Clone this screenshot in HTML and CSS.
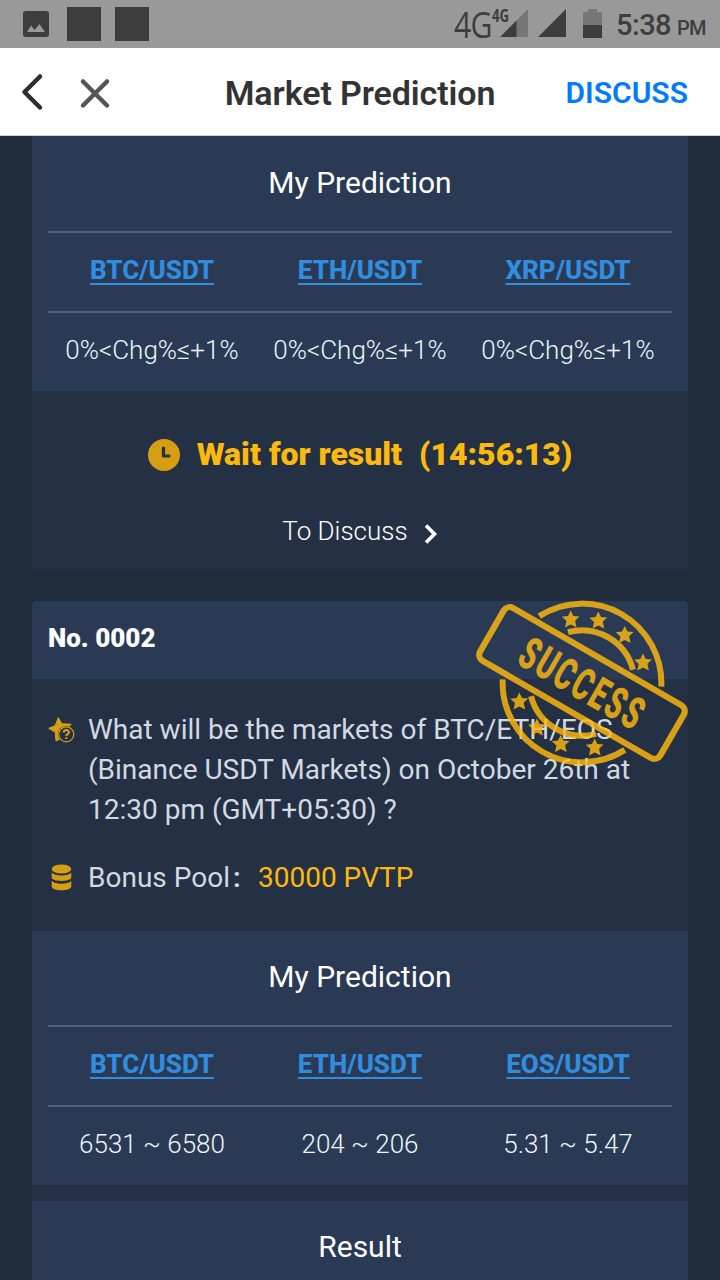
FILE: index.html
```html
<!DOCTYPE html>
<html lang="en">
<head>
<meta charset="utf-8">
<title>Market Prediction</title>
<link rel="stylesheet" href="styles.css">
</head>
<body>
<div class="status">
  <svg class="notif" width="126" height="34" viewBox="0 0 126 34" fill="#3d3d3d">
    <path fill-rule="evenodd" d="M3 4h20a3 3 0 0 1 3 3v20a3 3 0 0 1-3 3H3a3 3 0 0 1-3-3V7a3 3 0 0 1 3-3ZM4 25h18l-5.500-8-5 6-3.500-4.500Z"/>
    <path d="M44 0h34v34H44zM92 0h34v34H92z"/>
  </svg>
  <div class="signals">
    <span class="net">4G</span>
    <span class="net-small">4G</span>
    <svg class="bars" width="103" height="29" viewBox="0 0 103 29" fill="#3d3d3d">
      <path fill="#777" d="M28 0v28H16V12Z"/><path d="M0 28 16.500 11.500V28ZM38 28 66 0v28Z"/>
      <path fill="#777" d="M83 3h5V0h9v3h5v13H83Z"/><path d="M83 16h19v13H83Z"/>
    </svg>
    <span class="time">5:38</span><span class="pm">PM</span>
  </div>
</div>
<header class="bar">
  <svg class="nav" width="96" height="40" viewBox="0 0 96 40" fill="none" stroke-linecap="round" stroke-linejoin="round" stroke-width="4.500">
    <path stroke="#2e2e2e" d="M24 4.500 8.500 20 24 35.500"/><path stroke="#555" d="m67 9.500 24 24M91 9.500 67 33.500"/>
  </svg>
  <h1 class="title">Market Prediction</h1>
  <a class="discuss">DISCUSS</a>
</header>
<main class="content">
  <section class="panel">
    <h2 class="panel-title">My Prediction</h2>
    <div class="row pairs"><a>BTC/USDT</a><a>ETH/USDT</a><a>XRP/USDT</a></div>
    <div class="row values"><span>0%&lt;Chg%≤+1%</span><span>0%&lt;Chg%≤+1%</span><span>0%&lt;Chg%≤+1%</span></div>
  </section>
  <section class="waiting">
    <div class="wait">
      <svg width="32" height="32" viewBox="0 0 32 32"><circle cx="16" cy="16" r="16" fill="#d69e12"/><path d="M15.500 9v8H21" fill="none" stroke="#243144" stroke-width="3.200" stroke-linecap="round" stroke-linejoin="round"/></svg>
      <span class="wait-text">Wait for result</span><span class="countdown">(14:56:13)</span>
    </div>
    <div class="to-discuss"><span>To Discuss</span>
      <svg width="14" height="22" viewBox="0 0 14 22"><path d="m2 2.500 8.500 8.500L2 19.500" fill="none" stroke="#fff" stroke-width="3.600"/></svg>
    </div>
  </section>
  <article class="card">
    <div class="card-head">No. 0002</div>
    <div class="card-body">
      <div class="info">
        <svg class="info-icon star-icon" width="28" height="28" viewBox="0 0 28 28">
          <path fill="#d69e12" stroke="#d69e12" stroke-width="1" stroke-linejoin="round" d="m10.300 1.700 3.500 6 9.500.6L17 14l-2 7.500-7 3.500-.8-8.700L.7 12.300l6.500-2.800Z"/>
          <circle cx="18.300" cy="18.300" r="8.400" fill="#243144"/>
          <circle cx="18.300" cy="18.300" r="7.500" fill="none" stroke="#d69e12" stroke-width="1.200"/>
          <path d="M15.700 16.500c0-3.200 5.200-3.200 5.200-.2 0 2-2.600 1.800-2.600 3.700M18.300 21.300v1.800" fill="none" stroke="#d69e12" stroke-width="2.200"/>
        </svg>
        <p class="question">What will be the markets of BTC/ETH/EOS<br>(Binance USDT Markets) on October 26th at<br>12:30 pm (GMT+05:30) ?</p>
      </div>
      <div class="info pool">
        <svg class="info-icon coins" width="28" height="28" viewBox="0 0 28 28" fill="#d69e12">
          <ellipse cx="13.500" cy="5" rx="9.800" ry="4.500"/>
          <path d="M3.700 8.500c3 4 16.600 4 19.600 0v5c0 4.500-19.600 4.500-19.600 0ZM3.700 16.700c3 4 16.600 4 19.600 0v5.500c0 5.500-19.600 5.500-19.600 0Z"/>
        </svg>
        <p class="bonus"><span>Bonus Pool</span><span class="colon">:</span><span class="amount">30000 PVTP</span></p>
      </div>
    </div>
    <svg class="stamp" width="220" height="180" viewBox="-110 -90 220 180">
      <defs><path id="star" d="m0-9 2.700 5.500 6.200.5-4.500 4.300 1.500 6.600L0 4.900l-5.700 3.200L-4.300 1.500l-4.600-4.200 6.200-.8Z"/></defs>
      <g fill="none" stroke="#ffb90d">
        <g transform="rotate(30)">
          <rect x="-104" y="-30.500" width="208" height="61" rx="7" stroke-width="6.200"/>
          <path stroke-width="6" d="M-70.500-36.500a79.400 79.400 0 0 1 141 0M-70.500 36.500a79.400 79.400 0 0 0 141 0M-37.500-37a52.700 52.700 0 0 1 75 0M-37.500 37a52.700 52.700 0 0 0 75 0"/>
        </g>
      </g>
      <g fill="#ffb90d">
        <use href="#star" x="-11.300" y="-63.500"/><use href="#star" x="16.300" y="-62.500"/><use href="#star" x="42.700" y="-48"/><use href="#star" x="61" y="-20.500"/>
        <use href="#star" x="-62.700" y="18.500"/><use href="#star" x="-45" y="44.500"/><use href="#star" x="-21.300" y="61"/><use href="#star" x="12.700" y="64.500"/>
        <text class="stamp-text" transform="rotate(30) scale(.62 1)" x="-110" y="16">SUCCESS</text>
      </g>
    </svg>
  </article>
  <section class="panel">
    <h2 class="panel-title">My Prediction</h2>
    <div class="row pairs"><a>BTC/USDT</a><a>ETH/USDT</a><a>EOS/USDT</a></div>
    <div class="row values"><span>6531 ~ 6580</span><span>204 ~ 206</span><span>5.31 ~ 5.47</span></div>
  </section>
  <div class="divider"></div>
  <section class="panel result"><h2 class="panel-title">Result</h2></section>
</main>
</body>
</html>
```
FILE: styles.css
```css
* { box-sizing: border-box; }
body { margin: 0; height: 1280px; overflow: hidden; background: #202c3c; font-family: Roboto, "Noto Sans", sans-serif; color: #fff; }
h1, h2, p { margin: 0; font-weight: 400; }
svg { display: block; flex: none; }
.status { height: 48px; background: #999; color: #3d3d3d; display: flex; justify-content: space-between; padding: 0 15px 0 23px; }
.notif { margin-top: 7px; }
.signals { display: flex; white-space: nowrap; }
.net { font: 36px/50px "Open Sans", sans-serif; width: 38px; letter-spacing: -1px; transform: scaleX(.84); transform-origin: 0 0; }
.net-small { font: 700 17px/32px "Open Sans", sans-serif; width: 19px; margin-right: -11px; transform: scaleX(.78); transform-origin: 0 0; }
.bars { margin-top: 9px; margin-right: 14px; }
.time { font-size: 29px; line-height: 51px; font-weight: 500; width: 54px; letter-spacing: -.500px; margin: 0 7px 0 -1px; }
.pm { font-size: 20px; line-height: 56px; font-weight: 500; width: 28px; letter-spacing: -.800px; }
.bar { height: 88px; background: #fff; border-bottom: 1px solid #ccd3da; display: grid; grid-template-columns: 200px 1fr 200px; align-items: center; }
.nav { margin-left: 16px; }
.title { font-size: 34px; font-weight: 600; color: #333; text-align: center; white-space: nowrap; line-height: 40px; margin-top: 3px; letter-spacing: -.100px; }
.discuss { font-size: 30px; font-weight: 600; color: #007aff; text-align: right; padding: 1px 32px 0 0; line-height: 37px; }
.content { padding: 0 32px; }
.panel { background: #2a3a55; height: 254px; padding: 0 16px; }
.panel-title { font-size: 30px; line-height: 92px; height: 94px; text-align: center; }
.content > .panel:first-child { height: 255px; }
.content > .panel:first-child .panel-title { line-height: 94px; height: 95px; }
.row { display: grid; grid-template-columns: repeat(3, 1fr); border-top: 2px solid #536079; height: 80px; line-height: 75px; text-align: center; font-size: 26px; white-space: nowrap; }
.pairs { font-weight: 800; color: #308ddf; }
.pairs a { text-decoration: underline; text-decoration-thickness: 2px; text-underline-offset: 4px; }
.values { font-weight: 300; color: #edf5fc; }
.waiting { height: 178px; background: #243144; }
.wait { display: flex; align-items: center; justify-content: center; height: 128px; font-size: 32px; line-height: 36px; font-weight: 900; color: #ffb90d; }
.wait-text, .countdown { margin-bottom: 2px; }
.wait-text { margin-left: 17px; margin-right: 17px; }
.to-discuss { display: flex; align-items: center; justify-content: center; gap: 16px; font-size: 26px; font-weight: 300; line-height: 24px; }
.to-discuss span { margin-bottom: 3px; }
.to-discuss svg { margin-top: 3px; }
.card { margin-top: 32px; position: relative; }
.card-head { height: 78px; background: #2a3a55; border-radius: 4px 4px 0 0; padding-left: 16px; line-height: 74px; font-size: 26px; font-weight: 900; }
.card-body { height: 252px; background: #243144; padding: 31px 16px 0; font-size: 28px; line-height: 40px; color: #d3d9e2; }
.info { display: flex; gap: 12px; white-space: nowrap; }
.info-icon { margin-top: 6px; }
.pool { margin-top: 28px; }
.bonus { display: flex; }
.colon { width: 20px; padding-left: 3px; margin-right: 8px; font-weight: 600; }
.amount { color: #ffb90d; }
.stamp { position: absolute; left: 440px; top: -8px; opacity: .82; overflow: visible; }
.stamp-text { font: 900 45px Roboto, sans-serif; letter-spacing: 3.500px; }
.divider { height: 16px; background: #243144; }
.result { height: 79px; }
```
